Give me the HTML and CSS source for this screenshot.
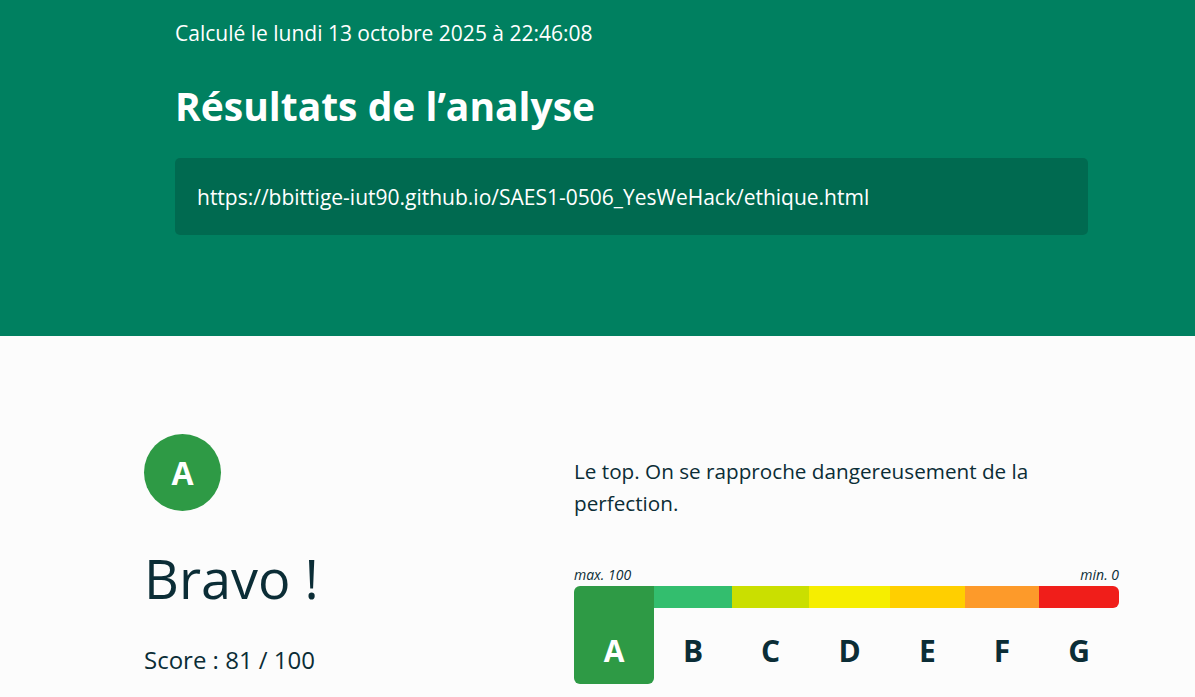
FILE: index.html
```html
<!DOCTYPE html>
<html lang="fr">
<head>
<meta charset="utf-8">
<title>Résultats de l'analyse</title>
<link rel="stylesheet" href="styles.css">
</head>
<body>
<header class="hero">
  <div class="hero-inner">
    <p class="date">Calculé le lundi 13 octobre 2025 à 22:46:08</p>
    <h1 class="title">Résultats de l’analyse</h1>
    <div class="url">https://bbittige-iut90.github.io/SAES1-0506_YesWeHack/ethique.html</div>
  </div>
</header>
<main class="results">
  <section class="summary">
    <div class="badge">A</div>
    <h2 class="bravo">Bravo !</h2>
    <p class="score">Score : 81 / 100</p>
  </section>
  <section class="detail">
    <p class="desc">Le top. On se rapproche dangereusement de la perfection.</p>
    <div class="scale-labels"><span>max. 100</span><span>min. 0</span></div>
    <div class="scale">
      <div class="cell active a"><div class="seg"></div><span class="letter">A</span></div>
      <div class="cell b"><div class="seg"></div><span class="letter">B</span></div>
      <div class="cell c"><div class="seg"></div><span class="letter">C</span></div>
      <div class="cell d"><div class="seg"></div><span class="letter">D</span></div>
      <div class="cell e"><div class="seg"></div><span class="letter">E</span></div>
      <div class="cell f"><div class="seg"></div><span class="letter">F</span></div>
      <div class="cell g"><div class="seg"></div><span class="letter">G</span></div>
    </div>
  </section>
</main>
</body>
</html>
```

FILE: styles.css
```css
* { box-sizing: border-box; }
html, body { margin: 0; padding: 0; }
body {
  font-family: "Open Sans", "Noto Sans", sans-serif;
  background: #fcfcfc;
  color: #0b2d36;
}
.hero {
  background: #008060;
  color: #fff;
  height: 336px;
}
.hero-inner {
  width: 913px;
  margin-left: 175px;
  padding-top: 19px;
}
.date {
  margin: 0;
  font-size: 21px;
  line-height: 28px;
}
.title {
  margin: 33px 0 0;
  font-size: 39px;
  line-height: 52px;
  font-weight: 700;
}
.url {
  margin-top: 26px;
  background: #006a50;
  border-radius: 5px;
  height: 77px;
  padding: 0 22px;
  display: flex;
  align-items: center;
  font-size: 21px;
}
.results {
  display: flex;
  margin-left: 144px;
  width: 975px;
  padding-top: 98px;
}
.summary { width: 430px; }
.badge {
  width: 77px;
  height: 77px;
  border-radius: 50%;
  background: #2e9a45;
  color: #fff;
  font-weight: 700;
  font-size: 32px;
  display: flex;
  align-items: center;
  justify-content: center;
}
.bravo {
  margin: 31px 0 0;
  font-size: 54px;
  font-weight: 400;
  line-height: 72px;
}
.score {
  margin: 30px 0 0;
  font-size: 24px;
  line-height: 32px;
}
.detail { flex: 1; padding-top: 21px; }
.desc {
  margin: 0;
  font-size: 20.7px;
  line-height: 32px;
  width: 480px;
}
.scale-labels {
  margin-top: 45px;
  display: flex;
  justify-content: space-between;
  font-style: italic;
  font-size: 14px;
  line-height: 22px;
}
.scale {
  display: grid;
  grid-template-columns: 80px 78px 77px 81px 75px 74px 80px;
}
.cell {
  display: flex;
  flex-direction: column;
  align-items: center;
  height: 98px;
}
.seg { height: 22px; width: 100%; }
.letter {
  margin-top: 23px;
  font-size: 30px;
  font-weight: 700;
  line-height: 40px;
}
.a .seg, .a.active { background: #2e9a45; }
.b .seg { background: #33be6e; }
.c .seg { background: #cadf00; }
.d .seg { background: #f6ee00; }
.e .seg { background: #ffcf00; }
.f .seg { background: #fd9a2a; }
.g .seg { background: #f01e1a; border-radius: 0 6px 6px 0; }
.cell.active { border-radius: 6px 0 6px 6px; color: #fff; }
.cell.active .seg { background: transparent; }
```
